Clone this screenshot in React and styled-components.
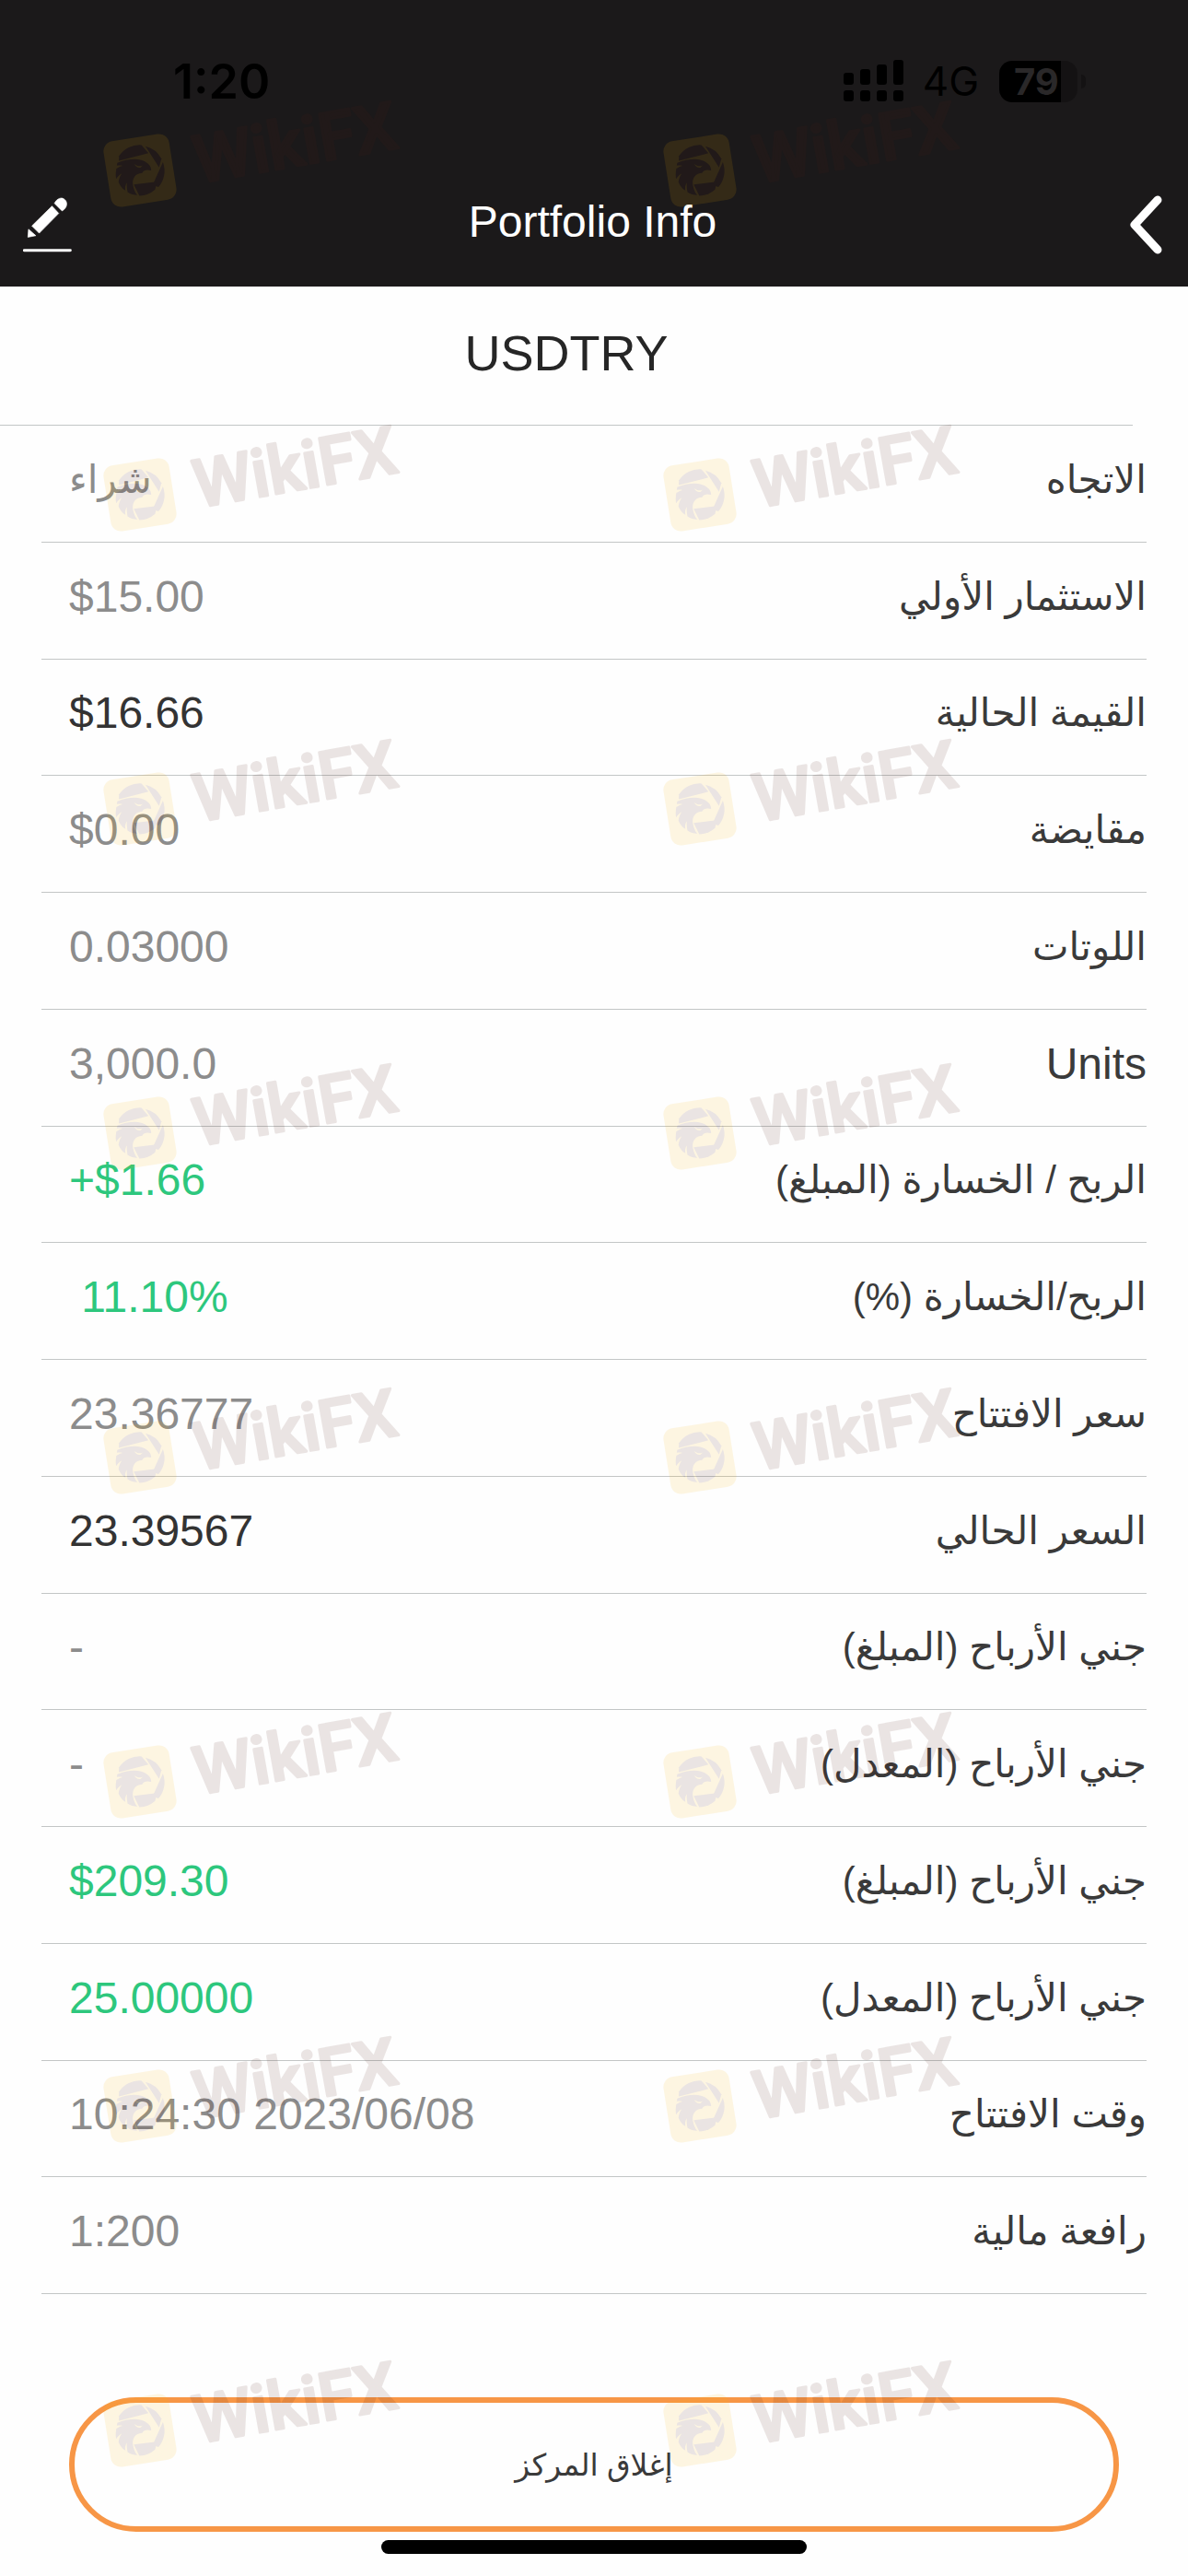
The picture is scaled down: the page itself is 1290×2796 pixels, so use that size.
import React from "react";
import styled, { createGlobalStyle } from "styled-components";

const details = [
  { label: "الاتجاه", value: "شراء", arabic: true },
  { label: "الاستثمار الأولي", value: "$15.00" },
  { label: "القيمة الحالية", value: "$16.66", tone: "dark" },
  { label: "مقايضة", value: "$0.00" },
  { label: "اللوتات", value: "0.03000" },
  { label: "Units", value: "3,000.0", latin: true },
  { label: "الربح / الخسارة (المبلغ)", value: "+$1.66", tone: "green" },
  { label: "الربح/الخسارة (%)", value: " 11.10%", tone: "green" },
  { label: "سعر الافتتاح", value: "23.36777" },
  { label: "السعر الحالي", value: "23.39567", tone: "dark" },
  { label: "جني الأرباح (المبلغ)", value: "-" },
  { label: "جني الأرباح (المعدل)", value: "-" },
  { label: "جني الأرباح (المبلغ)", value: "$209.30", tone: "green" },
  { label: "جني الأرباح (المعدل)", value: "25.00000", tone: "green" },
  { label: "وقت الافتتاح", value: "10:24:30 2023/06/08" },
  { label: "رافعة مالية", value: "1:200" },
];

const tones = {
  grey: "#8c8c8c",
  dark: "#333333",
  green: "#2dc77d",
};

const SignalIcon = () => (
  <svg width="66" height="46" viewBox="0 0 66 46" aria-hidden="true">
    <rect x="0" y="14" width="11" height="13" rx="3" />
    <rect x="18" y="10" width="11" height="17" rx="3" />
    <rect x="36" y="5" width="11" height="22" rx="3" />
    <rect x="54" y="0" width="11" height="27" rx="3" />
    <rect x="0" y="33" width="11" height="12" rx="3" />
    <rect x="18" y="33" width="11" height="12" rx="3" />
    <rect x="36" y="33" width="11" height="12" rx="3" />
    <rect x="54" y="33" width="11" height="12" rx="3" />
  </svg>
);

const PencilIcon = () => (
  <svg width="53" height="62" viewBox="45 40 160 185" aria-hidden="true">
    <g fill="#fff" stroke="#fff" strokeWidth="2" strokeLinejoin="round">
      <path d="M63 147 L61 173 L87 168 Z" />
      <path d="M140 71 L162 95 L98 160 L74 136 Z" />
      <path d="M148 62 C156 46 172 40 182 50 C193 60 189 78 173 87 Z" />
    </g>
    <path d="M49 216 H200" stroke="#fff" strokeWidth="9" strokeLinecap="round" />
  </svg>
);

const BackIcon = () => (
  <svg width="36" height="64" viewBox="0 0 36 64" aria-hidden="true">
    <path
      d="M31 5 L6 32 L31 59"
      fill="none"
      stroke="#fff"
      strokeWidth="9"
      strokeLinecap="round"
      strokeLinejoin="round"
    />
  </svg>
);

const Watermark = () => (
  <svg width="360" height="154" viewBox="0 -20 360 154" aria-hidden="true">
    <g opacity="0.11">
      <g transform="translate(48 86) rotate(-9)">
        <rect x="-36" y="-36" width="72" height="72" rx="11" fill="#fab400" />
        <g fill="#501b12">
          {/* shutter blades */}
          <path d="M-20 -19 A27 27 0 0 1 6 -27 L12 -17 L-21 -14 Z" />
          <path d="M10 -25 A27 27 0 0 1 25 -9 L21 0 Z" />
          <path d="M26 -5 A27 27 0 0 1 17 21 L11 18 Z" />
          <path d="M13 23 A27 27 0 0 1 -5 27 L-9 14 L16 15 Z" />
          {/* eagle head */}
          <path d="M-23 -12 C-14 -14 -4 -14 3 -11 C9 -8 13 -4 12 2 C8 0 4 0 2 3 C-6 2 -10 8 -10 14 C-10 19 -9 23 -7 26 C-11 25 -14 24 -17 21 C-17 17 -17 14 -16 11 C-19 14 -19 17 -19 19 C-22 17 -24 13 -25 9 C-24 5 -22 2 -20 0 C-23 1 -25 3 -27 5 C-27 0 -26 -3 -25 -6 C-22 -7 -20 -8 -18 -8 C-20 -9 -22 -9 -24 -9 Z" />
        </g>
        <path d="M-5 -8 C-2 -5 0 -4 4 -5 L1 -3 C-2 -3 -4 -5 -5 -8 Z" fill="#fab400" />
      </g>
      <text
        transform="translate(111 100) rotate(-10)"
        fontFamily="Roboto, Arial, sans-serif"
        fontWeight="500"
        fontSize="72"
        fill="#501b12"
        stroke="#501b12"
        strokeWidth="3"
        strokeLinejoin="round"
      >
        WikiFX
      </text>
    </g>
  </svg>
);

const App = () => {
  return (
    <Page>
      <GlobalStyle />
      <Header>
        <StatusBar>
          <Time>1:20</Time>
          <StatusIcons>
            <SignalIcon />
            <Network>4G</Network>
            <Battery>
              <BatteryLevel>79</BatteryLevel>
            </Battery>
          </StatusIcons>
        </StatusBar>
        <NavBar>
          <NavButton type="button" aria-label="Edit">
            <PencilIcon />
          </NavButton>
          <NavTitle>Portfolio Info</NavTitle>
          <NavButton type="button" aria-label="Back">
            <BackIcon />
          </NavButton>
        </NavBar>
      </Header>

      <Symbol>USDTRY</Symbol>

      <List dir="rtl">
        {details.map(({ label, value, tone, arabic, latin }, i) => (
          <Row key={i}>
            <Label $latin={latin}>{label}</Label>
            <Value $tone={tone} $arabic={arabic} dir="ltr">
              {value}
            </Value>
          </Row>
        ))}
      </List>

      <Footer>
        <CloseButton type="button" dir="rtl">
          إغلاق المركز
        </CloseButton>
        <HomeIndicator />
      </Footer>

      <Watermarks>
        {Array.from({ length: 8 }, (_, i) => (
          <WatermarkRow key={i}>
            <Watermark />
            <Watermark />
          </WatermarkRow>
        ))}
      </Watermarks>
    </Page>
  );
};

const GlobalStyle = createGlobalStyle`
  * {
    box-sizing: border-box;
  }

  body {
    margin: 0;
    background: #fefefe;
    font-family: "Liberation Sans", Arial, "DejaVu Sans", sans-serif;
  }
`;

const Page = styled.div`
  position: relative;
  display: flex;
  flex-direction: column;
  min-height: 100vh;
  overflow: hidden;
`;

const Header = styled.header`
  background: #1b191a;
  color: white;
  padding-bottom: 32px;
`;

const StatusBar = styled.div`
  display: flex;
  justify-content: space-between;
  align-items: center;
  height: 176px;
  padding: 0 120px 0 188px;
  color: black;
  font-family: Inter, "Liberation Sans", sans-serif;
`;

const Time = styled.span`
  font-size: 52px;
  font-weight: 600;
`;

const StatusIcons = styled.div`
  display: flex;
  align-items: center;
`;

const Network = styled.span`
  margin: 0 22px 0 20px;
  font-size: 44px;
`;

const Battery = styled.div`
  position: relative;
  width: 85px;
  height: 45px;
  border-radius: 14px;
  background: linear-gradient(to right, #000 79%, #141213 79%);

  &::after {
    content: "";
    position: absolute;
    top: 15px;
    right: -9px;
    width: 5px;
    height: 15px;
    border-radius: 0 5px 5px 0;
    background: #141213;
  }
`;

const BatteryLevel = styled.span`
  display: block;
  padding-left: 16px;
  color: #2a2829;
  font-size: 40px;
  font-weight: 700;
  line-height: 45px;
`;

const NavBar = styled.nav`
  display: grid;
  grid-template-columns: 1fr auto 1fr;
  align-items: center;
  height: 103px;
  padding: 32px 28px 0 25px;
`;

const NavButton = styled.button`
  display: flex;
  justify-self: start;
  padding: 0;
  border: none;
  background: none;
  cursor: pointer;

  &:last-child {
    justify-self: end;
  }
`;

const NavTitle = styled.h1`
  margin: 0;
  padding-bottom: 6px;
  font-size: 48px;
  font-weight: 400;
  line-height: 60px;
`;

const Symbol = styled.h2`
  margin: 0 60px 0 0;
  padding: 40px 0 46px;
  border-bottom: 1px solid #c3c6c6;
  color: #262626;
  font-size: 54px;
  font-weight: 400;
  line-height: 64px;
  text-align: center;
`;

const List = styled.dl`
  flex: 1;
  display: flex;
  flex-direction: column;
  margin: 0 45px;
`;

const Row = styled.div`
  flex: 1;
  display: flex;
  justify-content: space-between;
  align-items: center;
  padding: 0 0 8px 30px;
  border-bottom: 1px solid #c3c6c6;
  line-height: 60px;
`;

const Label = styled.dt`
  color: #3a3a3a;
  font-size: ${({ $latin }) => ($latin ? "48px" : "42px")};
`;

const Value = styled.dd`
  margin: 0;
  color: ${({ $tone }) => tones[$tone || "grey"]};
  font-size: ${({ $arabic }) => ($arabic ? "42px" : "48px")};
  white-space: pre;
`;

const Footer = styled.footer`
  display: flex;
  flex-direction: column;
  align-items: center;
  gap: 9px;
  padding: 112px 75px 24px;
`;

const CloseButton = styled.button`
  width: 100%;
  height: 146px;
  border: 6px solid #f79646;
  border-radius: 73px;
  background: none;
  color: #3a3a3a;
  font-family: inherit;
  font-size: 33px;
  cursor: pointer;
`;

const HomeIndicator = styled.div`
  width: 462px;
  height: 15px;
  border-radius: 8px;
  background: black;
`;

const Watermarks = styled.div`
  position: absolute;
  inset: 0;
  padding: 79px 0 0 104px;
  pointer-events: none;
`;

const WatermarkRow = styled.div`
  display: flex;
  gap: 248px;
  height: 352px;

  &:nth-child(2) {
    height: 341px;
  }
`;

export default App;
